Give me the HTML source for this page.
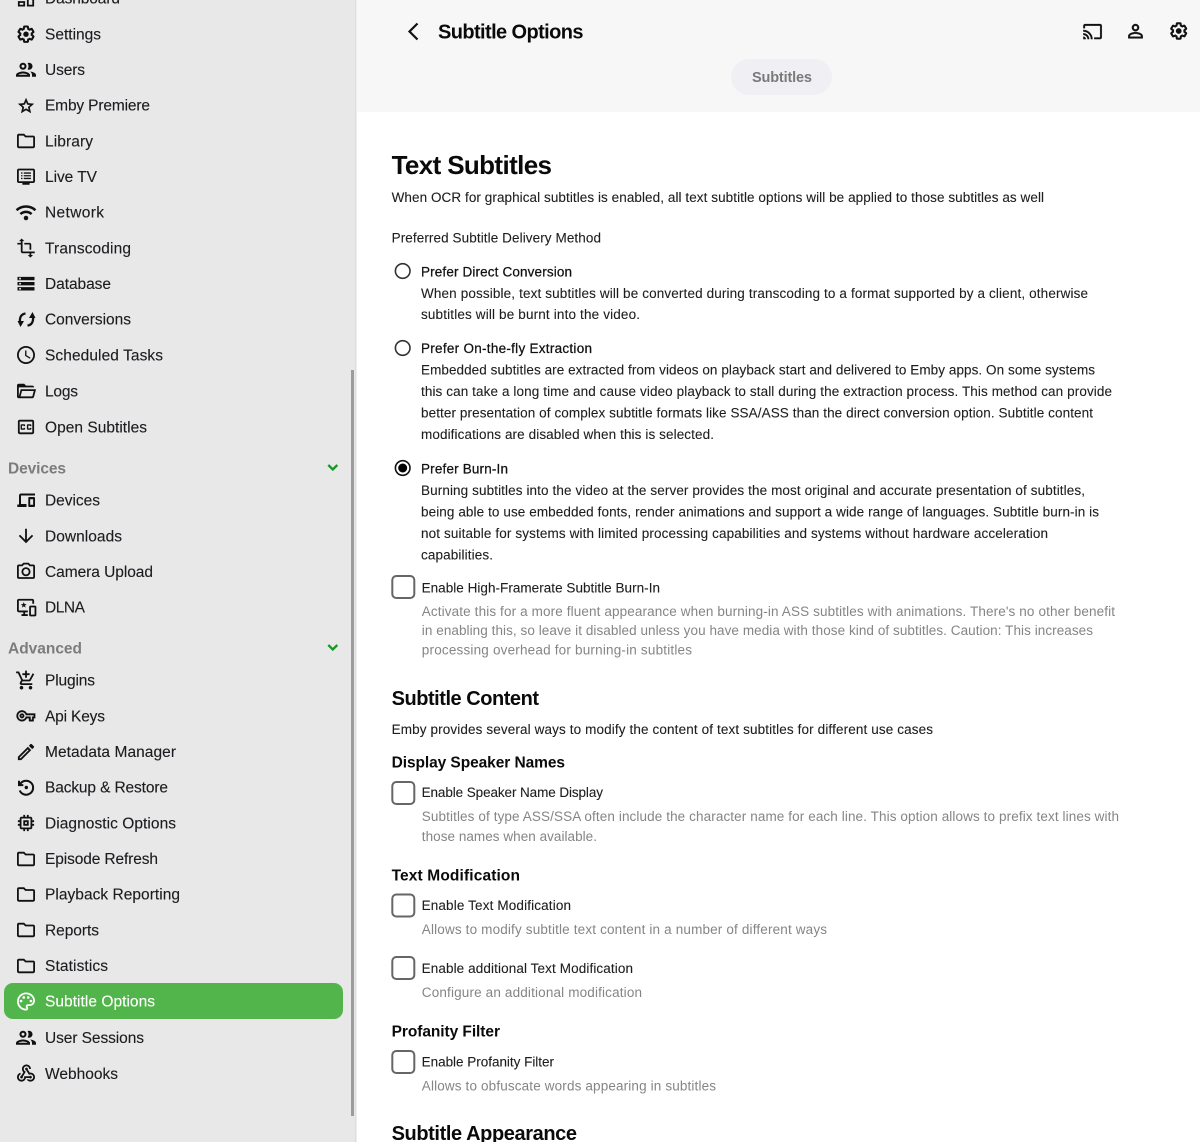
<!DOCTYPE html>
<html lang="en"><head><meta charset="utf-8"><title>Subtitle Options</title>
<style>
html,body{margin:0;padding:0;width:1200px;height:1142px;overflow:hidden;background:#fff}
svg{display:block;font-family:"Liberation Sans",sans-serif}
.n{font-size:15.5px;fill:#1c1c20;stroke:#1c1c20;stroke-width:.12px}
.h{font-size:15.5px;font-weight:700;fill:#7c7c7c}
.t{font-size:13.5px;fill:#1e1e1e;stroke:#1e1e1e;stroke-width:.1px}
.m{font-size:13.5px;fill:#111;stroke:#111;stroke-width:.25px}
.g{font-size:13.5px;fill:#858585}
.b{font-weight:700;fill:#0a0a0a}
.c{fill:none;stroke:#666;stroke-width:2}
.i{fill:#111}
</style></head><body>
<svg xmlns="http://www.w3.org/2000/svg" width="1200" height="1142" viewBox="0 0 1200 1142">
<rect width="356" height="1142" fill="#e8e8e8"/>
<rect x="355" width="1.5" height="1142" fill="#dedede"/>
<rect x="357" width="843" height="112" fill="#f7f7f7"/>
<rect x="351" y="370" width="3" height="746" fill="#9c9c9c"/>
<rect x="4" y="983" width="339" height="36" rx="9" fill="#52b54b"/>

<g class="i">
<g transform="translate(15.2,-12.4) scale(.9)"><path d="M19 5v2h-4V5h4M9 5v6H5V5h4m10 8v6h-4v-6h4M9 17v2H5v-2h4M21 3h-8v6h8V3zM11 3H3v10h8V3zm10 8h-8v10h8V11zm-10 4H3v6h8v-6z"/></g>
<g transform="translate(16.4,24.6) scale(.8)"><path fill="none" stroke="#111" stroke-width="2.6" d="M19.14 12.94c.04-.3.06-.61.06-.94 0-.32-.02-.64-.07-.94l2.03-1.58c.18-.14.23-.41.12-.61l-1.92-3.32c-.12-.22-.37-.29-.59-.22l-2.39.96c-.5-.38-1.03-.7-1.62-.94l-.36-2.54c-.04-.24-.24-.41-.48-.41h-3.84c-.24 0-.43.17-.47.41l-.36 2.54c-.59.24-1.13.57-1.62.94l-2.39-.96c-.22-.08-.47 0-.59.22L2.74 8.87c-.12.21-.08.47.12.61l2.03 1.58c-.05.3-.09.63-.09.94s.02.64.07.94l-2.03 1.58c-.18.14-.23.41-.12.61l1.92 3.32c.12.22.37.29.59.22l2.39-.96c.5.38 1.03.7 1.62.94l.36 2.54c.05.24.24.41.48.41h3.84c.24 0 .44-.17.47-.41l.36-2.54c.59-.24 1.13-.56 1.62-.94l2.39.96c.22.08.47 0 .59-.22l1.92-3.32c.12-.22.07-.47-.12-.61l-2.01-1.58z"/><circle cx="12" cy="12" r="3.4"/></g>
<g transform="translate(14,57.7)"><path d="M9 13.75c-2.34 0-7 1.17-7 3.5V19h14v-1.75c0-2.33-4.66-3.5-7-3.5zM4.34 17c.84-.58 2.87-1.25 4.66-1.25s3.82.67 4.66 1.25H4.34zM9 12c1.93 0 3.5-1.57 3.5-3.5S10.93 5 9 5 5.5 6.57 5.5 8.5 7.07 12 9 12zm0-5c.83 0 1.5.67 1.5 1.5S9.83 10 9 10s-1.5-.67-1.5-1.5S8.17 7 9 7zm7.04 6.81c1.16.84 1.96 1.96 1.96 3.44V19h4v-1.75c0-2.02-3.5-3.17-5.96-3.44zM15 12c1.93 0 3.5-1.57 3.5-3.5S16.93 5 15 5c-.54 0-1.04.13-1.5.35.63.89 1 1.98 1 3.15s-.37 2.26-1 3.15c.46.22.96.35 1.5.35z"/></g>
<g transform="translate(16.8,96.7) scale(.77)"><path stroke="#111" stroke-width=".6" d="M22 9.24l-7.19-.62L12 2 9.19 8.63 2 9.24l5.46 4.73L5.82 21 12 17.27 18.18 21l-1.63-7.03L22 9.24zM12 15.4l-3.76 2.27 1-4.28-3.32-2.88 4.38-.38L12 6.1l1.71 4.04 4.38.38-3.32 2.88 1 4.28L12 15.4z"/></g>
<g transform="translate(15.2,130.2) scale(.9)"><path d="M9.17 6l2 2H20v10H4V6h5.17M10 4H4c-1.1 0-1.99.9-1.99 2L2 18c0 1.1.9 2 2 2h16c1.1 0 2-.9 2-2V8c0-1.1-.9-2-2-2h-8l-2-2z"/></g>
<g transform="translate(15.2,165.9) scale(.9)"><path d="M20 3H4c-1.1 0-2 .9-2 2v12c0 1.1.9 2 2 2h4v2h8v-2h4c1.1 0 2-.9 2-2V5c0-1.1-.9-2-2-2zm0 14H4V5h16v12z"/><path d="M6.500 7.200h1.600v1.500H6.500zM9.500 7.200h8v1.500h-8zM6.500 10.200h1.600v1.500H6.500zM9.500 10.200h8v1.500h-8zM6.500 13.200h1.600v1.500H6.500zM9.500 13.200h8v1.500h-8z"/></g>
<g transform="translate(15.2,201.6) scale(.9)"><path fill="none" stroke="#111" stroke-width="2.8" d="M1.500 9.500c6-5.400 15-5.400 21 0M5.800 13.800c3.700-3.200 8.700-3.200 12.400 0"/><circle cx="12" cy="18.200" r="2.500"/></g>
<g transform="translate(15.6,237.6) scale(.87)"><path d="M22 18v-2H8V4h2L7 1 4 4h2v2H2v2h4v8c0 1.1.9 2 2 2h8v2h-2l3 3 3-3h-2v-2h4zM10 8h6v6h2V8c0-1.1-.9-2-2-2h-6v2z"/></g>
<g transform="translate(15.8,273.5) scale(.85)"><path d="M2 20h20v-4H2v4zm2-3h2v2H4v-2zM2 4v4h20V4H2zm4 3H4V5h2v2zm-4 7h20v-4H2v4zm2-3h2v2H4v-2z"/></g>
<path fill="none" stroke="#111" stroke-width="2.300" d="M25.500 313.500C21.500 314 19.500 317 20 322M27.500 325.500C31.500 325 33.500 322 33 317"/>
<path d="M17.500 321h6.500l-3.500 6zM35.500 318H29l3.500-6z"/>
<g transform="translate(15.2,344.2) scale(.9)"><path d="M11.99 2C6.47 2 2 6.48 2 12s4.47 10 9.99 10C17.52 22 22 17.52 22 12S17.52 2 11.99 2zM12 20c-4.42 0-8-3.58-8-8s3.58-8 8-8 8 3.58 8 8-3.58 8-8 8zm.5-13H11v6l5.25 3.15.75-1.23-4.5-2.67z"/></g>
<g transform="translate(15.2,380.2) scale(.9)"><path d="M6.1,10L4,18V8H21A2,2 0 0,0 19,6H12L10,4H4A2,2 0 0,0 2,6V18A2,2 0 0,0 4,20H19C19.9,20 20.7,19.4 20.9,18.5L23.2,10H6.1M19,18H6L7.6,12H20.6L19,18Z"/></g>
<g transform="translate(15.2,416.2) scale(.9)"><path d="M19 4H5c-1.11 0-2 .9-2 2v12c0 1.1.89 2 2 2h14c1.1 0 2-.9 2-2V6c0-1.1-.9-2-2-2zm0 14H5V6h14v12zM7 15h3c.55 0 1-.45 1-1v-1H9.5v.5h-2v-3h2v.5H11v-1c0-.55-.45-1-1-1H7c-.55 0-1 .45-1 1v4c0 .55.45 1 1 1zm7 0h3c.55 0 1-.45 1-1v-1h-1.5v.5h-2v-3h2v.5H18v-1c0-.55-.45-1-1-1h-3c-.55 0-1 .45-1 1v4c0 .55.45 1 1 1z"/></g>
<path d="M21 493.500h14v2H21v8.500h5.500v3H17.300v-2.500H19V495.500c0-1.100.9-2 2-2z"/>
<path fill-rule="evenodd" d="M29.300 497h4.700c.6 0 1 .4 1 1v8c0 .6-.4 1-1 1h-4.700c-.6 0-1-.4-1-1v-8c0-.6.4-1 1-1zm.9 2.300v5.500h2.900v-5.500z"/>
<g transform="translate(15.2,525.2) scale(.9)"><path d="M20 12l-1.41-1.41L13 16.17V4h-2v12.17l-5.58-5.59L4 12l8 8 8-8z"/></g>
<g transform="translate(15.2,560.9) scale(.9)"><path d="M14.12 4l1.83 2H20v12H4V6h4.05l1.83-2h4.24M15 2H9L7.17 4H4c-1.1 0-2 .9-2 2v12c0 1.1.9 2 2 2h16c1.1 0 2-.9 2-2V6c0-1.1-.9-2-2-2h-3.17L15 2zm-3 7c1.65 0 3 1.35 3 3s-1.35 3-3 3-3-1.35-3-3 1.35-3 3-3m0-2c-2.76 0-5 2.24-5 5s2.24 5 5 5 5-2.24 5-5-2.24-5-5-5z"/></g>
<g transform="translate(15.2,596.6) scale(.9)"><path d="M4 2.500h15c1.100 0 2 .9 2 2V8h-2V4.500H4v11h10v2h-3v2h3v2H7v-2h2v-2H4c-1.100 0-2-.9-2-2v-11c0-1.100.9-2 2-2z"/><path d="M9.500 6l.9 2.300 2.400.1-1.900 1.500.7 2.400-2.100-1.400-2.100 1.400.7-2.400-1.900-1.500 2.400-.1z"/><path d="M17 10h5c.8 0 1.500.7 1.500 1.500v9c0 .8-.7 1.500-1.500 1.500h-5c-.8 0-1.500-.7-1.500-1.500v-9c0-.8.7-1.500 1.500-1.500zm.5 2v8h4v-8z"/></g>
<g transform="translate(15.2,669.7) scale(.9)"><path d="M11 9h2V6h3V4h-3V1h-2v3H8v2h3v3zm-4 9c-1.100 0-1.990.9-1.990 2S5.900 22 7 22s2-.9 2-2-.9-2-2-2zm10 0c-1.100 0-1.990.9-1.990 2s.89 2 1.990 2 2-.9 2-2-.9-2-2-2zm-9.830-3.250l.03-.12.9-1.630h7.450c.75 0 1.410-.41 1.750-1.030l3.860-7.010L19.420 4h-.01l-1.100 2-2.760 5H8.530l-.13-.27L6.160 6l-.95-2-.94-2H1v2h2l3.600 7.590-1.350 2.450c-.16.28-.25.61-.25.96 0 1.100.9 2 2 2h12v-2H7.420c-.13 0-.25-.11-.25-.25z"/></g>
<g transform="translate(16.500,706.500) scale(.78)"><path stroke="#111" stroke-width=".4" d="M22 19h-6v-4h-2.680c-1.140 2.420-3.600 4-6.320 4-3.860 0-7-3.140-7-7s3.140-7 7-7c2.720 0 5.170 1.580 6.320 4H24v6h-2v4zm-4-2h2v-4h2v-2H11.940l-.23-.67C11.010 8.340 9.110 7 7 7c-2.760 0-5 2.240-5 5s2.240 5 5 5c2.110 0 4.010-1.340 4.710-3.330l.23-.67H18v4zM7 15c-1.650 0-3-1.350-3-3s1.350-3 3-3 3 1.350 3 3-1.350 3-3 3zm0-4c-.55 0-1 .45-1 1s.45 1 1 1 1-.45 1-1-.45-1-1-1z"/></g>
<g transform="translate(15.200,741.200) scale(.9)"><path d="M14.060 9.020l.92.92L5.920 19H5v-.92l9.060-9.060M17.660 3c-.25 0-.51.1-.7.29l-1.830 1.830 3.750 3.750 1.830-1.830c.39-.39.39-1.020 0-1.410l-2.340-2.340c-.2-.2-.45-.29-.71-.29zm-3.600 3.190L3 17.250V21h3.750L17.810 9.940l-3.750-3.750z"/></g>
<path fill="none" stroke="#111" stroke-width="2" d="M19.900 784.500A7 7 0 1 1 19.700 790.500M19 780.800v4.300h4.300"/>
<circle cx="26.300" cy="787.500" r="1.700"/>
<g transform="translate(15.200,812.200) scale(.9)"><path d="M15 9H9v6h6V9zm-2 4h-2v-2h2v2zm8-2V9h-2V7c0-1.100-.9-2-2-2h-2V3h-2v2h-2V3H9v2H7c-1.100 0-2 .9-2 2v2H3v2h2v2H3v2h2v2c0 1.100.9 2 2 2h2v2h2v-2h2v2h2v-2h2c1.100 0 2-.9 2-2v-2h2v-2h-2v-2h2zm-4 6H7V7h10v10z"/></g>
<g transform="translate(15.200,848.200) scale(.9)"><path d="M9.170 6l2 2H20v10H4V6h5.170M10 4H4c-1.100 0-1.990.9-1.990 2L2 18c0 1.100.9 2 2 2h16c1.100 0 2-.9 2-2V8c0-1.100-.9-2-2-2h-8l-2-2z"/></g>
<g transform="translate(15.200,883.700) scale(.9)"><path d="M9.170 6l2 2H20v10H4V6h5.170M10 4H4c-1.100 0-1.990.9-1.990 2L2 18c0 1.100.9 2 2 2h16c1.100 0 2-.9 2-2V8c0-1.100-.9-2-2-2h-8l-2-2z"/></g>
<g transform="translate(15.200,919.200) scale(.9)"><path d="M9.170 6l2 2H20v10H4V6h5.170M10 4H4c-1.100 0-1.990.9-1.990 2L2 18c0 1.100.9 2 2 2h16c1.100 0 2-.9 2-2V8c0-1.100-.9-2-2-2h-8l-2-2z"/></g>
<g transform="translate(15.200,955.200) scale(.9)"><path d="M9.170 6l2 2H20v10H4V6h5.170M10 4H4c-1.100 0-1.990.9-1.990 2L2 18c0 1.100.9 2 2 2h16c1.100 0 2-.9 2-2V8c0-1.100-.9-2-2-2h-8l-2-2z"/></g>
<g transform="translate(15.200,990.700) scale(.9)" fill="#fff"><path d="M12 22C6.490 22 2 17.510 2 12S6.490 2 12 2s10 4.040 10 9c0 3.310-2.690 6-6 6h-1.770c-.28 0-.5.22-.5.5 0 .12.05.23.13.33.41.47.64 1.060.64 1.670 0 1.380-1.120 2.500-2.500 2.500zm0-18c-4.410 0-8 3.590-8 8s3.590 8 8 8c.28 0 .5-.22.5-.5 0-.16-.08-.28-.14-.35-.41-.46-.63-1.050-.63-1.650 0-1.380 1.120-2.500 2.500-2.500H16c2.210 0 4-1.790 4-4 0-3.860-3.590-7-8-7z"/><circle cx="6.500" cy="11.500" r="1.500"/><circle cx="9.500" cy="7.500" r="1.500"/><circle cx="14.500" cy="7.500" r="1.500"/><circle cx="17.500" cy="11.500" r="1.500"/></g>
<g transform="translate(14,1025.700)"><path d="M9 13.750c-2.340 0-7 1.170-7 3.500V19h14v-1.750c0-2.330-4.660-3.500-7-3.500zM4.340 17c.84-.58 2.870-1.250 4.660-1.250s3.820.67 4.660 1.250H4.340zM9 12c1.930 0 3.500-1.570 3.500-3.500S10.930 5 9 5 5.500 6.570 5.500 8.500 7.070 12 9 12zm0-5c.83 0 1.500.67 1.500 1.500S9.830 10 9 10s-1.500-.67-1.500-1.500S8.170 7 9 7zm7.040 6.810c1.160.84 1.960 1.960 1.960 3.440V19h4v-1.750c0-2.020-3.500-3.170-5.960-3.440zM15 12c1.930 0 3.500-1.570 3.500-3.500S16.930 5 15 5c-.54 0-1.040.13-1.500.35.63.89 1 1.980 1 3.150s-.37 2.260-1 3.150c.46.22.96.35 1.500.35z"/></g>
<g transform="translate(15.200,1062.700) scale(.9)"><path d="M10 15h5.880c.27-.31.67-.5 1.120-.5.83 0 1.500.67 1.500 1.500s-.67 1.500-1.500 1.500c-.44 0-.84-.19-1.120-.5H11.900c-.46 2.280-2.480 4-4.900 4-2.760 0-5-2.240-5-5 0-2.420 1.720-4.440 4-4.900v2.070c-1.160.41-2 1.530-2 2.830 0 1.650 1.350 3 3 3s3-1.350 3-3v-1zm2.500-11c1.650 0 3 1.350 3 3h2c0-2.760-2.240-5-5-5s-5 2.240-5 5c0 1.430.6 2.710 1.560 3.620l-2.350 3.900c-.68.14-1.210.74-1.210 1.480 0 .83.67 1.500 1.500 1.500s1.500-.67 1.500-1.500c0-.16-.02-.31-.07-.45l3.380-5.630C10.490 9.610 9.500 8.420 9.500 7c0-1.650 1.350-3 3-3zm4.500 9c-.64 0-1.230.2-1.720.54l-3.050-5.070C11.530 8.350 11 7.740 11 7c0-.83.67-1.500 1.500-1.500S14 6.170 14 7c0 .15-.02.29-.06.43l2.190 3.650c.28-.05.57-.08.87-.08 2.760 0 5 2.240 5 5s-2.240 5-5 5c-1.850 0-3.470-1.010-4.330-2.500h2.670c.48.32 1.050.5 1.660.5 1.650 0 3-1.350 3-3s-1.350-3-3-3z"/></g>
<g transform="translate(1082.500,21.500) scale(.84)"><path stroke="#111" stroke-width=".3" d="M21 3H3c-1.100 0-2 .9-2 2v3h2V5h18v14h-7v2h7c1.100 0 2-.9 2-2V5c0-1.100-.9-2-2-2zM1 18v3h3c0-1.660-1.340-3-3-3zm0-4v2c2.760 0 5 2.240 5 5h2c0-3.870-3.130-7-7-7zm0-4v2c4.970 0 9 4.030 9 9h2c0-6.080-4.930-11-11-11z"/></g>
<g transform="translate(1124.700,20.400) scale(.9)"><path stroke="#111" stroke-width=".4" d="M12 5.900c1.160 0 2.100.94 2.100 2.100s-.94 2.100-2.100 2.100S9.900 9.160 9.900 8s.94-2.100 2.100-2.100m0 9c2.970 0 6.100 1.460 6.100 2.100v1.100H5.900V17c0-.64 3.130-2.100 6.100-2.100M12 4C9.790 4 8 5.790 8 8s1.790 4 4 4 4-1.790 4-4-1.790-4-4-4zm0 9c-2.670 0-8 1.340-8 4v3h16v-3c0-2.660-5.330-4-8-4z"/></g>
<g transform="translate(1169.100,21.400) scale(.8)"><path fill="none" stroke="#111" stroke-width="2.600" d="M19.140 12.940c.04-.3.06-.61.06-.94 0-.32-.02-.64-.07-.94l2.030-1.580c.18-.14.23-.41.12-.61l-1.920-3.320c-.12-.22-.37-.29-.59-.22l-2.390.96c-.5-.38-1.030-.7-1.620-.94l-.36-2.540c-.04-.24-.24-.41-.48-.41h-3.840c-.24 0-.43.17-.47.41l-.36 2.540c-.59.24-1.130.57-1.620.94l-2.390-.96c-.22-.08-.47 0-.59.22L2.740 8.870c-.12.21-.08.47.12.61l2.030 1.580c-.05.3-.09.63-.09.94s.02.64.07.94l-2.030 1.580c-.18.14-.23.41-.12.61l1.920 3.320c.12.22.37.29.59.22l2.390-.96c.5.38 1.030.7 1.620.94l.36 2.540c.05.24.24.41.48.41h3.840c.24 0 .44-.17.47-.41l.36-2.540c.59-.24 1.130-.56 1.620-.94l2.390.96c.22.08.47 0 .59-.22l1.920-3.320c.12-.22.07-.47-.12-.61l-2.010-1.580z"/><circle cx="12" cy="12" r="3.600"/></g>
<path fill="none" stroke="#111" stroke-width="2.200" d="M417.500 23.500l-8 8 8 8"/>
</g>

<path fill="none" stroke="#159a25" stroke-width="2.300" d="M328.300 465l4.500 4.500 4.500-4.500M328.300 645l4.500 4.500 4.500-4.500"/>

<g class="n">
<text x="45" y="3.500" textLength="75">Dashboard</text>
<text x="45" y="39.500" textLength="56">Settings</text>
<text x="45" y="75" textLength="40">Users</text>
<text x="45" y="110.700" textLength="105">Emby Premiere</text>
<text x="45" y="146.300" textLength="48">Library</text>
<text x="45" y="182" textLength="52">Live TV</text>
<text x="45" y="217.700" textLength="59">Network</text>
<text x="45" y="253.300" textLength="86">Transcoding</text>
<text x="45" y="289" textLength="66">Database</text>
<text x="45" y="324.700" textLength="86">Conversions</text>
<text x="45" y="360.300" textLength="118">Scheduled Tasks</text>
<text x="45" y="396.300" textLength="33">Logs</text>
<text x="45" y="432.700" textLength="102">Open Subtitles</text>
<text x="45" y="505.300" textLength="55">Devices</text>
<text x="45" y="541.300" textLength="77">Downloads</text>
<text x="45" y="577" textLength="108">Camera Upload</text>
<text x="45" y="612.700" textLength="40">DLNA</text>
<text x="45" y="685.300" textLength="50">Plugins</text>
<text x="45" y="721.300" textLength="60">Api Keys</text>
<text x="45" y="757" textLength="131">Metadata Manager</text>
<text x="45" y="792.300" textLength="123">Backup &amp; Restore</text>
<text x="45" y="828.300" textLength="131">Diagnostic Options</text>
<text x="45" y="864" textLength="113">Episode Refresh</text>
<text x="45" y="899.300" textLength="135">Playback Reporting</text>
<text x="45" y="935.300" textLength="54">Reports</text>
<text x="45" y="971" textLength="63">Statistics</text>
<text x="45" y="1006.300" textLength="110" style="fill:#fff;stroke:#fff">Subtitle Options</text>
<text x="45" y="1042.800" textLength="99">User Sessions</text>
<text x="45" y="1078.800" textLength="73">Webhooks</text>
</g>
<text class="h" x="8" y="473.500" textLength="58">Devices</text>
<text class="h" x="8" y="653.500" textLength="74">Advanced</text>

<text class="b" x="438" y="38.500" textLength="145.500" style="font-size:20px">Subtitle Options</text>
<rect x="731" y="59" width="101" height="36" rx="18" fill="#f0f0f4"/>
<text x="752" y="82" textLength="60" style="font-size:14.500px;font-weight:700;fill:#7a7a7a">Subtitles</text>

<text class="b" x="391.600" y="174" textLength="160.400" style="font-size:26px">Text Subtitles</text>
<g class="t">
<text x="391.600" y="202" textLength="652.400">When OCR for graphical subtitles is enabled, all text subtitle options will be applied to those subtitles as well</text>
<text x="391.600" y="242.500" textLength="209.400">Preferred Subtitle Delivery Method</text>
<text x="421" y="298" textLength="667">When possible, text subtitles will be converted during transcoding to a format supported by a client, otherwise</text>
<text x="421" y="319" textLength="219">subtitles will be burnt into the video.</text>
<text x="421" y="374.500" textLength="674">Embedded subtitles are extracted from videos on playback start and delivered to Emby apps. On some systems</text>
<text x="421" y="396" textLength="691">this can take a long time and cause video playback to stall during the extraction process. This method can provide</text>
<text x="421" y="417.500" textLength="672">better presentation of complex subtitle formats like SSA/ASS than the direct conversion option. Subtitle content</text>
<text x="421" y="439" textLength="293">modifications are disabled when this is selected.</text>
<text x="421" y="495" textLength="664">Burning subtitles into the video at the server provides the most original and accurate presentation of subtitles,</text>
<text x="421" y="516.500" textLength="678">being able to use embedded fonts, render animations and support a wide range of languages. Subtitle burn-in is</text>
<text x="421" y="538" textLength="627">not suitable for systems with limited processing capabilities and systems without hardware acceleration</text>
<text x="421" y="559.500" textLength="72">capabilities.</text>
<text x="421.600" y="592.500" textLength="238.400">Enable High-Framerate Subtitle Burn-In</text>
<text x="391.600" y="734" textLength="541.400">Emby provides several ways to modify the content of text subtitles for different use cases</text>
<text x="421.600" y="797" textLength="181.400">Enable Speaker Name Display</text>
<text x="421.600" y="910" textLength="149.400">Enable Text Modification</text>
<text x="421.600" y="973" textLength="211.400">Enable additional Text Modification</text>
<text x="421.600" y="1066.500" textLength="132.400">Enable Profanity Filter</text>
</g>
<g class="m">
<text x="421" y="276.500" textLength="151">Prefer Direct Conversion</text>
<text x="421" y="353" textLength="171">Prefer On-the-fly Extraction</text>
<text x="421" y="473.500" textLength="87">Prefer Burn-In</text>
</g>
<g class="g">
<text x="421.800" y="616" textLength="693.200">Activate this for a more fluent appearance when burning-in ASS subtitles with animations. There's no other benefit</text>
<text x="421.800" y="635" textLength="671.200">in enabling this, so leave it disabled unless you have media with those kind of subtitles. Caution: This increases</text>
<text x="421.800" y="654.500" textLength="270.200">processing overhead for burning-in subtitles</text>
<text x="421.800" y="821" textLength="697.200">Subtitles of type ASS/SSA often include the character name for each line. This option allows to prefix text lines with</text>
<text x="421.800" y="841" textLength="175.200">those names when available.</text>
<text x="421.800" y="934" textLength="405.200">Allows to modify subtitle text content in a number of different ways</text>
<text x="421.800" y="997" textLength="220.200">Configure an additional modification</text>
<text x="421.800" y="1090.500" textLength="294.200">Allows to obfuscate words appearing in subtitles</text>
</g>
<text class="b" x="391.600" y="705" textLength="147.400" style="font-size:20px">Subtitle Content</text>
<text class="b" x="391.600" y="767.500" textLength="173.400" style="font-size:15.500px">Display Speaker Names</text>
<text class="b" x="391.600" y="880.500" textLength="128.400" style="font-size:15.500px">Text Modification</text>
<text class="b" x="391.600" y="1036.500" textLength="108.400" style="font-size:15.500px">Profanity Filter</text>
<text class="b" x="391.600" y="1140" textLength="185.400" style="font-size:20px">Subtitle Appearance</text>

<circle cx="402.700" cy="271" r="7.300" fill="none" stroke="#333" stroke-width="1.600"/>
<circle cx="402.700" cy="348" r="7.300" fill="none" stroke="#333" stroke-width="1.600"/>
<circle cx="402.700" cy="468" r="7.300" fill="none" stroke="#111" stroke-width="1.600"/>
<circle cx="402.700" cy="468" r="4.500" fill="#000"/>
<rect class="c" x="392.300" y="576" width="22" height="22" rx="4"/>
<rect class="c" x="392.300" y="782" width="22" height="22" rx="4"/>
<rect class="c" x="392.300" y="894.500" width="22" height="22" rx="4"/>
<rect class="c" x="392.300" y="957" width="22" height="22" rx="4"/>
<rect class="c" x="392.300" y="1051" width="22" height="22" rx="4"/>
</svg>
</body></html>
